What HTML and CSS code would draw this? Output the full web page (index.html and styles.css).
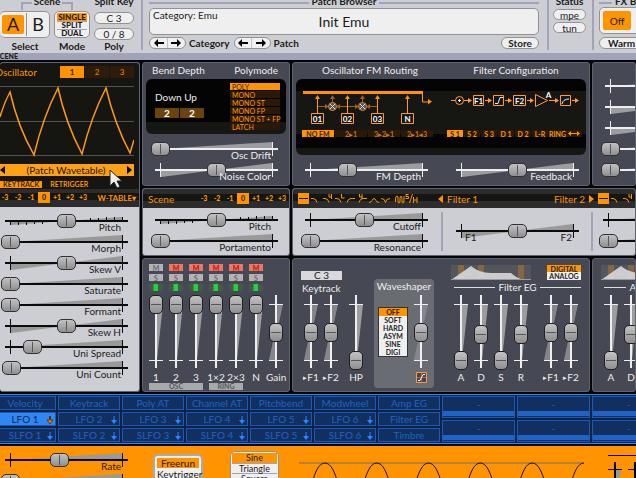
FILE: index.html
```html
<!DOCTYPE html>
<html lang="en">
<head>
<meta charset="utf-8">
<title>Synth editor</title>
<link rel="stylesheet" href="styles.css">
</head>
<body>
<svg class="defs" width="0" height="0" aria-hidden="true">
  <symbol id="h-uni" viewBox="0 0 131 14"><path class="wedge" d="M9 7L122 0V7z"/><path class="rail" d="M4 6h123v2H4zM9 0h1v14H9zM121 0h1v14h-1z"/></symbol>
  <symbol id="h-bi" viewBox="0 0 131 14"><path class="wedge" d="M10 7V14L65 7zM65 7L121 0V7z"/><path class="rail" d="M4 6h123v2H4zM9 0h1v14H9zM121 0h1v14h-1z"/></symbol>
  <symbol id="h-step" viewBox="0 0 131 14"><path class="wedge" d="M10 7V11L65 7zM65 7L121 3V7z"/><path class="rail" d="M4 6h123v2H4zM9 8h1v3H9zM17 8h1v3h-1zM25 8h1v3h-1zM33 8h1v2h-1zM41 8h1v2h-1zM89 4h1v2h-1zM97 4h1v2h-1zM105 3h1v3h-1zM113 3h1v3h-1zM121 3h1v3h-1z"/></symbol>
  <symbol id="v-uni" viewBox="0 0 20 75"><path class="wedge" d="M10 9h7L11 65z"/><path class="rail" d="M9 0h2v73H9zM3 9h14v1H3zM3 65h14v1H3z"/></symbol>
  <symbol id="v-bi" viewBox="0 0 20 75"><path class="wedge dim" d="M10 9h7L11 37zM9 37L3 65h6z"/><path class="rail" d="M9 0h2v73H9zM3 9h14v1H3zM3 65h14v1H3z"/></symbol>
  <symbol id="types" viewBox="0 0 120 12">
    <path fill="#ff9300" d="M0 0h11v11H0z"/><path stroke="#201200" d="M1 5.500h9"/>
    <g fill="none" stroke="#ff9300">
      <path d="M13 5.500h2q3 0 4 4M25 5.500h2q3 0 4 4M31 1v3h3M33.500 1v5M37 5.500h2q3 0 4 4M43.500 1v4h3M49 9.500q1-4 4-4h4M61 9.500q1-4 4-4h4M61.500 1v3h3M64 1v5M71 9.500q2 0 3-2t2-2t2 2t3 2M83 5.500q4 0 4.500 4q.5-4 4.500-4M97.500 9V6q0-3 1.500-3t1 3v2q0 2 1 2t1-2V6q0-3 1-3t1 3v2q0 2 1 2t1-2V3"/>
      <path d="M110.500 1.500h-2.500v2h2.500v2h-3M114.500 1l-3 9M115.500 4v6M119 4v6M115.500 7h3.500"/>
    </g>
  </symbol>
  <symbol id="down" viewBox="0 0 8 8"><path d="M3.500 0h1v4H7L4 8 1 4h2.500z" fill="currentColor"/></symbol>
  <symbol id="arrow-l" viewBox="0 0 10 8"><path d="M0 4l4-4v3h6v2H4v3z"/></symbol>
  <symbol id="arrow-r" viewBox="0 0 10 8"><path d="M10 4L6 0v3H0v2h6v3z"/></symbol>
  <symbol id="env" viewBox="0 0 80 15">
    <path fill="#55565c" d="M0 0h80v15H0z"/><path fill="#846747" d="M7 0h6v15H7zM27 0h6v15h-6zM67 0h6v15h-6z"/>
    <path fill="#d9d9dc" fill-opacity=".9" d="M0 15L20 1Q28 8 40 8h20q5 5 13 7z"/><path stroke="#999aa0" d="M0 14.500h80"/>
  </symbol>
</svg>

<header class="top">
  <section class="bar scene-bar">
    <div class="legend bracket"><span>Scene</span></div>
    <div class="legend"><span>Split Key</span></div>
    <div class="cell"><div class="box ab"><button class="on">A</button><button>B</button></div><span>Select</span></div>
    <div class="cell"><div class="box modes"><button class="on">SINGLE</button><button>SPLIT</button><button>DUAL</button></div><span>Mode</span></div>
    <div class="cell poly"><div class="pills"><button class="pill">C 3</button><button class="pill">0 / 8</button></div><span>Poly</span></div>
  </section>
  <section class="bar patch">
    <div class="legend ruled"><span>Patch Browser</span></div>
    <div class="box name"><span class="cat">Category: Emu</span><strong>Init Emu</strong><span></span></div>
    <div class="nav">
      <div class="pill pair"><button aria-label="Previous category"><svg><use href="#arrow-l"/></svg></button><button aria-label="Next category"><svg><use href="#arrow-r"/></svg></button></div><span>Category</span>
      <div class="pill pair"><button aria-label="Previous patch"><svg><use href="#arrow-l"/></svg></button><button aria-label="Next patch"><svg><use href="#arrow-r"/></svg></button></div><span>Patch</span>
      <button class="pill store">Store</button>
    </div>
  </section>
  <section class="bar status">
    <div class="legend"><span>Status</span></div>
    <button class="pill">mpe</button><button class="pill">tun</button>
  </section>
  <section class="bar fx">
    <div class="legend ruled"><span>FX Bypass</span></div>
    <div class="box fxbox"><button class="on">Off</button></div>
    <button class="pill warm">Warm</button>
  </section>
</header>
<div class="band">SCENE</div>

<main class="rack">
  <section class="panel osc">
    <div class="screen">
      <div class="head"><h2>Oscillator</h2><div class="tabs"><button class="on">1</button><button>2</button><button>3</button></div></div>
      <svg class="wave" viewBox="0 0 134 78"><path stroke="#55554f" d="M0 5.500h134M0 40.500h134M0 74.500h134"/><path fill="none" stroke="#ff9a14" stroke-width="1.500" d="M0 36Q4 22 10 11Q18 46 34 74Q43 36 58 7Q66 43 82 73Q91 36 106 7Q115 44 130 72L134 59"/></svg>
      <button class="table"><svg viewBox="0 0 5 8"><path d="M5 0v8L0 4z"/></svg><span>(Patch Wavetable)</span><svg viewBox="0 0 5 8"><path d="M0 0v8l5-4z"/></svg></button>
      <div class="flags"><button class="on">KEYTRACK</button><button>RETRIGGER</button></div>
      <svg class="cursor" viewBox="0 0 13 20"><path d="M1 1v16l4-4 3 6 3-1.500-3-5.500h5z" fill="#eee" stroke="#222"/></svg>
    </div>
    <div class="strip"><div class="oct"><button>-3</button><button>-2</button><button>-1</button><button class="on">0</button><button>+1</button><button>+2</button><button>+3</button></div><button class="wt">W-TABLE▾</button></div>
    <div class="stack first">
      <label class="hs"><svg><use href="#h-step"/></svg><input type="range" value="50"><span>Pitch</span></label>
      <label class="hs"><svg><use href="#h-uni"/></svg><input type="range" value="0"><span>Morph</span></label>
      <label class="hs"><svg><use href="#h-bi"/></svg><input type="range" value="50"><span>Skew V</span></label>
      <label class="hs"><svg><use href="#h-uni"/></svg><input type="range" value="0"><span>Saturate</span></label>
      <label class="hs"><svg><use href="#h-uni"/></svg><input type="range" value="0"><span>Formant</span></label>
      <label class="hs"><svg><use href="#h-bi"/></svg><input type="range" value="50"><span>Skew H</span></label>
      <label class="hs"><svg><use href="#h-uni"/></svg><input type="range" value="20"><span>Uni Spread</span></label>
      <label class="hs"><svg><use href="#h-uni"/></svg><input type="range" value="1"><span>Uni Count</span></label>
    </div>
  </section>

  <section class="panel dark bend">
    <div class="titles"><h2>Bend Depth</h2><h2>Polymode</h2></div>
    <div class="lcd bendlcd">
      <div class="depth"><span>Down Up</span><div><button>2</button><button>2</button></div></div>
      <div class="polymode"><button class="on">POLY</button><button>MONO</button><button>MONO ST</button><button>MONO FP</button><button>MONO ST + FP</button><button>LATCH</button></div>
    </div>
    <div class="stack">
      <label class="hs"><svg><use href="#h-uni"/></svg><input type="range" value="0"><span>Osc Drift</span></label>
      <label class="hs"><svg><use href="#h-bi"/></svg><input type="range" value="50"><span>Noise Color</span></label>
    </div>
  </section>

  <section class="panel dark routing">
    <div class="titles"><h2>Oscillator FM Routing</h2><h2>Filter Configuration</h2></div>
    <div class="lcd wide">
      <div class="half">
        <svg class="diagram" viewBox="0 0 140 46">
          <g fill="none" stroke="#ff9a2a"><path stroke-width="3" stroke="#ff9300" d="M2 9.500h120"/><path d="M121.500 10v9h7M16.500 15v15M46.500 15v15M76.500 15v15M106.500 15v15"/><path stroke="#a35d17" d="M31.500 15v5M61.500 15v5M17 23.500h10M36 23.500h10M47 23.500h10M66 23.500h10"/><path d="M10.500 30.500h12v10h-12zM40.500 30.500h12v10h-12zM70.500 30.500h12v10h-12zM100.500 30.500h12v10h-12z"/></g>
          <path fill="#ff9300" d="M14 16l2.500-4 2.500 4zM44 16l2.500-4 2.500 4zM74 16l2.500-4 2.500 4zM104 16l2.500-4 2.500 4zM127 16l4 2.500-4 3z"/>
          <path fill="#a35d17" d="M29 16l2.500-4 2.500 4zM59 16l2.500-4 2.500 4zM24 21l4 2.500-4 2.500zM39 21l-4 2.500 4 2.500zM54 21l4 2.500-4 2.500zM69 21l-4 2.500 4 2.500z"/>
          <g fill="#555" stroke="#d98032"><circle cx="31.500" cy="23.500" r="4"/><circle cx="61.500" cy="23.500" r="4"/></g><path stroke="#ddd" d="M29 21l5 5M34 21l-5 5M59 21l5 5M64 21l-5 5"/>
          <g class="ntext"><text x="16.500" y="38.500">01</text><text x="46.500" y="38.500">02</text><text x="76.500" y="38.500">03</text><text x="106.500" y="38.500">N</text></g>
        </svg>
        <div class="keys k4"><button class="on">NO FM</button><button>2▸1</button><button>3▸2▸1</button><button>2▸1◂3</button></div>
      </div>
      <div class="half">
        <svg class="diagram" viewBox="0 0 140 46">
          <g fill="none" stroke="#ff9a40"><path d="M0 17.500h4M13 17.500h5M34 17.500h5M54 17.500h5M76 17.500h5M98 17.500h7M121 17.500h5"/><circle cx="8.500" cy="17.500" r="4"/><path d="M22.500 12.500h10v10h-10zM42.500 12.500h10v10h-10zM62.500 12.500h12v10h-12zM84.500 11.500l12 6-12 6zM109.500 12.500h10v10h-10z"/></g>
          <path fill="#ff9a40" d="M17 15l4 2.500-4 2.500zM37 15l4 2.500-4 2.500zM57 15l4 2.500-4 2.500zM79 15l4 2.500-4 2.500zM104 15l4 2.500-4 2.500zM124 15l4 2.500-4 2.500z"/>
          <path fill="none" stroke="#eee" d="M7 17.500h3M8.500 16v3M44 20.500h3l2-6h3M111 21q1-5 7-5"/>
          <g class="ntext"><text x="27.500" y="20.500">F1</text><text x="68.500" y="20.500">F2</text><text x="97.500" y="15">A</text></g>
        </svg>
        <div class="keys k8"><button class="on">S 1</button><button>S 2</button><button>S 3</button><button>D 1</button><button>D 2</button><button>L-R</button><button>RING</button><button aria-label="Wide"><svg viewBox="0 0 12 5"><path d="M0 2.500L3 0v2h6V0l3 2.500L9 5V3H3v2z" fill="#ff9300"/></svg></button></div>
      </div>
    </div>
    <div class="two">
      <label class="hs"><svg><use href="#h-uni"/></svg><input type="range" value="33"><span>FM Depth</span></label>
      <label class="hs"><svg><use href="#h-bi"/></svg><input type="range" value="50"><span>Feedback</span></label>
    </div>
  </section>

  <section class="panel dark edge">
    <label class="hs nothumb"><svg><use href="#h-uni"/></svg><input type="range" value="100" aria-label="Volume"></label>
    <label class="hs nothumb"><svg><use href="#h-bi"/></svg><input type="range" value="100" aria-label="Pan"></label>
    <label class="hs nothumb"><svg><use href="#h-bi"/></svg><input type="range" value="100" aria-label="Width"></label>
    <label class="hs"><svg><use href="#h-uni"/></svg><input type="range" value="0" aria-label="Send 1"></label>
    <label class="hs"><svg><use href="#h-uni"/></svg><input type="range" value="0" aria-label="Send 2"></label>
  </section>

  <section class="panel scene">
    <div class="strip"><h2>Scene</h2><div class="oct"><button>-3</button><button>-2</button><button>-1</button><button class="on">0</button><button>+1</button><button>+2</button><button>+3</button></div></div>
    <div class="stack">
      <label class="hs"><svg><use href="#h-step"/></svg><input type="range" value="50"><span>Pitch</span></label>
      <label class="hs"><svg><use href="#h-uni"/></svg><input type="range" value="0"><span>Portamento</span></label>
    </div>
  </section>

  <section class="panel filters">
    <div class="strip"><svg class="types"><use href="#types"/></svg><div class="fnames"><button><svg viewBox="0 0 5 8"><path d="M5 0v8L0 4z"/></svg>Filter 1</button><button>Filter 2<svg viewBox="0 0 5 8"><path d="M0 0v8l5-4z"/></svg></button></div><svg class="types"><use href="#types"/></svg></div>
    <div class="fbody">
      <div class="stack">
        <label class="hs"><svg><use href="#h-uni"/></svg><input type="range" value="48"><span>Cutoff</span></label>
        <label class="hs"><svg><use href="#h-uni"/></svg><input type="range" value="0"><span>Resonance</span></label>
      </div>
      <div class="balance"><label class="hs"><svg><use href="#h-bi"/></svg><input type="range" value="50"><span>F1</span><span>F2</span></label></div>
      <div class="stack">
        <label class="hs nothumb"><svg><use href="#h-uni"/></svg><input type="range" value="100" aria-label="Cutoff 2"></label>
        <label class="hs"><svg><use href="#h-uni"/></svg><input type="range" value="0" aria-label="Resonance 2"></label>
      </div>
    </div>
  </section>

  <section class="panel dark mixer">
    <div class="ch"><button>M</button><button>S</button><i></i><label class="vs"><svg><use href="#v-uni"/></svg><input type="range" value="100"><span>1</span></label></div>
    <div class="ch"><button class="mute">M</button><button>S</button><i></i><label class="vs"><svg><use href="#v-uni"/></svg><input type="range" value="100"><span>2</span></label></div>
    <div class="ch"><button class="mute">M</button><button>S</button><i></i><label class="vs"><svg><use href="#v-uni"/></svg><input type="range" value="100"><span>3</span></label></div>
    <div class="ch"><button class="mute">M</button><button>S</button><i></i><label class="vs"><svg><use href="#v-uni"/></svg><input type="range" value="100"><span>1×2</span></label></div>
    <div class="ch"><button class="mute">M</button><button>S</button><i></i><label class="vs"><svg><use href="#v-uni"/></svg><input type="range" value="100"><span>2×3</span></label></div>
    <div class="ch"><button class="mute">M</button><button>S</button><i></i><label class="vs"><svg><use href="#v-uni"/></svg><input type="range" value="100"><span>N</span></label></div>
    <div class="ch gain"><label class="vs"><svg><use href="#v-bi"/></svg><input type="range" value="50"><span>Gain</span></label></div>
    <div class="tag t1">OSC</div><div class="tag t2">RING</div>
  </section>

  <section class="panel dark mods">
    <div class="keytrack">
      <button class="root">C 3</button><h2>Keytrack</h2>
      <div class="faders">
        <label class="vs"><svg><use href="#v-bi"/></svg><input type="range" value="50"><span><small>▸</small>F1</span></label>
        <label class="vs"><svg><use href="#v-bi"/></svg><input type="range" value="50"><span><small>▸</small>F2</span></label>
        <label class="vs hp"><svg><use href="#v-uni"/></svg><input type="range" value="0"><span>HP</span></label>
      </div>
    </div>
    <div class="shaper">
      <h2>Waveshaper</h2>
      <div class="shbody">
        <div class="shlist"><button class="on">OFF</button><button>SOFT</button><button>HARD</button><button>ASYM</button><button>SINE</button><button>DIGI</button></div>
        <label class="vs"><svg><use href="#v-bi"/></svg><input type="range" value="50" aria-label="Drive"><span><svg class="shicon" viewBox="0 0 11 11"><path fill="#45464f" stroke="#ff9a40" d="M.5.5h10v10H.5z"/><path stroke="#a86a3a" d="M1 5.500h9M5.500 1v9"/><path fill="none" stroke="#fff" d="M2 8.500h2l3-6h2"/></svg></span></label>
      </div>
    </div>
    <div class="eg">
      <div class="egtop"><svg class="env"><use href="#env"/></svg><div class="da"><button class="on">DIGITAL</button><button>ANALOG</button></div></div>
      <h2 class="ruled"><span>Filter EG</span></h2>
      <div class="faders">
        <label class="vs"><svg><use href="#v-uni"/></svg><input type="range" value="0"><span>A</span></label>
        <label class="vs"><svg><use href="#v-uni"/></svg><input type="range" value="46"><span>D</span></label>
        <label class="vs"><svg><use href="#v-uni"/></svg><input type="range" value="0"><span>S</span></label>
        <label class="vs"><svg><use href="#v-uni"/></svg><input type="range" value="46"><span>R</span></label>
        <label class="vs to"><svg><use href="#v-bi"/></svg><input type="range" value="50"><span><small>▸</small>F1</span></label>
        <label class="vs"><svg><use href="#v-bi"/></svg><input type="range" value="50"><span><small>▸</small>F2</span></label>
      </div>
    </div>
  </section>

  <section class="panel dark amp">
    <div class="eg">
      <div class="egtop"><svg class="env"><use href="#env"/></svg></div>
      <h2 class="ruled"><span>Amp EG</span></h2>
      <div class="faders">
        <label class="vs"><svg><use href="#v-uni"/></svg><input type="range" value="0"><span>A</span></label>
        <label class="vs"><svg><use href="#v-uni"/></svg><input type="range" value="46"><span>D</span></label>
      </div>
    </div>
  </section>
</main>

<section class="modbar">
  <div class="sources">
    <button>Velocity</button><button>Keytrack</button><button>Poly AT</button><button>Channel AT</button><button>Pitchbend</button><button>Modwheel</button><button>Amp EG</button>
    <button class="on">LFO 1<svg><use href="#down"/></svg></button><button>LFO 2<svg><use href="#down"/></svg></button><button>LFO 3<svg><use href="#down"/></svg></button><button>LFO 4<svg><use href="#down"/></svg></button><button>LFO 5<svg><use href="#down"/></svg></button><button>LFO 6<svg><use href="#down"/></svg></button><button>Filter EG</button>
    <button>SLFO 1<svg><use href="#down"/></svg></button><button>SLFO 2<svg><use href="#down"/></svg></button><button>SLFO 3<svg><use href="#down"/></svg></button><button>SLFO 4<svg><use href="#down"/></svg></button><button>SLFO 5<svg><use href="#down"/></svg></button><button>SLFO 6<svg><use href="#down"/></svg></button><button>Timbre</button>
  </div>
  <div class="macros"><button>-</button><button>-</button><button>-</button><button>-</button><button>-</button><button>-</button></div>
</section>

<section class="lfo">
  <div class="stack">
    <label class="hs"><svg><use href="#h-uni"/></svg><input type="range" value="44"><span>Rate</span></label>
    <label class="hs"><svg><use href="#h-uni"/></svg><input type="range" value="0" aria-label="Phase"></label>
  </div>
  <div class="box trig"><button class="on">Freerun</button><button>Keytrigger</button></div>
  <div class="box shapes"><button class="on">Sine</button><button>Triangle</button><button>Square</button></div>
  <svg class="sine" viewBox="0 0 286 34"><path stroke="#b9803a" stroke-width="2" d="M0 6h286"/><path fill="none" stroke="#111" d="M0 45C13 45 13 6 26 6S39 45 52 45S65 6 78 6S91 45 104 45S117 6 130 6S143 45 156 45S169 6 182 6S195 45 208 45S221 6 234 6S247 45 260 45S273 6 286 6"/></svg>
  <svg class="lfoeg" viewBox="0 0 28 26"><path d="M0 0h28v1H0zM0 14h14v1H0zM6 7h2v19H6zM20 14h8v1h-8zM26 7h2v19h-2z"/><path fill="#999" d="M8 15h5l-2 11H8z"/></svg>
</section>
</body>
</html>
```
FILE: styles.css
```css
* { box-sizing: border-box; }
body {
  margin: 0;
  overflow: hidden;
  background: #060608;
  font: 10px/12px Lato, "Liberation Sans", sans-serif;
  color: #1c1c20;
}
h2 { margin: 0; font-size: 10px; line-height: 12px; font-weight: 400; }
button {
  margin: 0; padding: 0; border: 0;
  background: none; color: inherit;
  font: inherit; line-height: inherit;
  white-space: nowrap;
}
svg { display: block; }
.defs { position: absolute; }

/* Header */
.top {
  display: flex;
  height: 59px;
  margin-top: -6px;
  padding-bottom: 3px;
  background: #cdced3;
}
.bar { border-right: 2px solid #a1a3b9; font-weight: 700; }
.legend { height: 13px; line-height: 14px; text-align: center; white-space: nowrap; }
.ruled { display: flex; align-items: center; gap: 3px; }
.ruled::before, .ruled::after { content: ""; flex: 1; height: 2px; background: #a1a3b9; }
.legend.ruled::before, .legend.ruled::after { margin-top: 4px; }
.bracket { grid-column: span 2; display: flex; justify-content: center; gap: 2px; padding-left: 4px; }
.bracket::before, .bracket::after { content: ""; width: 9px; height: 6px; margin-top: 8px; border-top: 2px solid #a1a3b9; }
.bracket::before { border-left: 2px solid #a1a3b9; }
.bracket::after { border-right: 2px solid #a1a3b9; }
.box { border: 1px solid #929292; border-radius: 5px; background: #efefef; }
.on { background: #ff9300; }
.pill {
  height: 12px;
  border: 1px solid #929292;
  border-radius: 6px;
  background: #efefef;
  line-height: 10px;
  text-align: center;
}
.scene-bar {
  display: grid;
  grid-template-columns: 50px 36px 40px;
  grid-template-rows: 13px 1fr;
  column-gap: 4px;
  padding-right: 7px;
}
.cell { display: flex; flex-direction: column; align-items: center; padding-top: 4px; gap: 2px; }
.cell > .box { width: 100%; height: 27px; }
.ab { display: flex; padding: 3px 0 3px 2px; font-size: 18px; font-weight: 400; border-left: 0; }
.ab button { flex: 1; line-height: 19px; }
.ab .on { border-radius: 2px; }
.ab button + button { margin: -2px 0 -2px 2px; border-left: 1px solid #929292; }
.modes { padding: 1px 2px; font-size: 8px; line-height: 8px; font-weight: 900; }
.modes button { display: block; width: 100%; height: 8px; }
.modes button + button { border-top: 1px solid #a1a3b9; line-height: 7px; }
.pills { display: grid; gap: 4px; width: 100%; height: 27px; padding-top: 1px; font-weight: 400; }
.patch { flex: 1; padding: 0 8px 0 6px; }
.name {
  display: grid;
  grid-template-columns: 1fr auto 1fr;
  align-items: center;
  height: 27px;
  margin-top: 1px;
  padding: 0 3px;
  font-weight: 400;
}
.name .cat { align-self: start; }
.name strong { font-size: 14px; font-weight: 400; }
.nav { display: flex; align-items: center; gap: 3px; margin-top: 2px; }
.nav span { margin-right: 1px; }
.pair { display: flex; width: 37px; }
.pair button { flex: 1; display: flex; align-items: center; justify-content: center; }
.pair button + button { box-shadow: -1px 0 0 #c3c4d0; }
.pair svg { width: 10px; height: 8px; }
.store { width: 38px; margin-left: auto; font-weight: 700; }
.status { width: 45px; padding: 0 6px 0 4px; }
.status .pill { display: block; width: 100%; margin-top: 2px; height: 11px; line-height: 8px; font-weight: 400; }
.fx { width: 42px; padding-left: 5px; border: 0; overflow: hidden; }
.fx .legend { width: 78px; }
.fxbox { width: 92px; height: 27px; padding: 3px; }
.fxbox button { width: 28px; height: 19px; border-radius: 2px; font-weight: 400; }
.warm { width: 92px; margin-top: 3px; padding-left: 8px; text-align: left; font-weight: 700; }
.band { height: 7px; overflow: hidden; background: #a1a3b9; font-size: 7px; line-height: 7px; font-weight: 900; text-indent: -4px; }

/* Rack */
.rack {
  display: grid;
  grid-template-columns: 140px 148px 298px minmax(0, 1fr);
  grid-template-rows: minmax(124px, auto) minmax(68px, auto) minmax(134px, auto);
  gap: 2px;
  margin-top: 2px;
}
.panel { border: 1px solid #5d6470; border-radius: 3px; background: #cdced3; overflow: hidden; }
.dark { background: #464853; color: #eee; --rail: #eee; --wedge: #9c9da1; --dim: #85868d; }
.osc { grid-row: span 3; border-left: 0; }
.filters { grid-column: span 2; }
.screen { position: relative; height: 126px; padding: 3px 5px 0 0; background: #151512; color: #ff9300; }
.head { display: flex; justify-content: space-between; margin-left: -5px; }
.tabs { display: grid; grid-template-columns: repeat(3, 24px); gap: 1px; font-size: 8px; line-height: 11px; font-weight: 700; }
.tabs button { background: #2e1b09; color: #c87412; }
.tabs .on, .flags .on { background: #ff9300; color: #3a2000; }
.wave { width: 134px; height: 78px; margin-top: 3px; }
.table { display: flex; justify-content: space-between; align-items: center; width: 134px; height: 12px; padding: 0 2px 0 0; margin-top: 5px; line-height: 12px; background: #ffa114; color: #1d1200; }
.table svg { width: 5px; height: 8px; }
.flags { display: flex; gap: 5px; margin-top: 5px; font-size: 7px; line-height: 7px; font-weight: 700; }
.flags button { height: 7px; padding: 0 3px; }
.cursor { position: absolute; left: 109px; top: 106px; width: 13px; height: 20px; }
.strip {
  display: flex;
  align-items: center;
  height: 19px;
  padding: 0 1px 0 5px;
  background: linear-gradient(#2c2c2c 5px, #151512 5px 12px, #2c2c2c 12px);
  color: #ff9300;
}
.oct { display: grid; grid-template-columns: repeat(7, 12px); gap: 1px; margin-left: auto; font-size: 7px; line-height: 11px; font-weight: 900; }
.oct .on { color: #3a2000; }
.osc .strip { padding-left: 0; margin-top: -1px; justify-content: space-between; }
.osc .oct { margin-left: -1px; }
.wt { font-size: 8px; line-height: 10px; font-weight: 700; margin-right: 2px; }

/* Sliders */
.stack { display: grid; align-content: start; grid-auto-rows: 21px; padding: 5px 0 0 8px; }
.first { padding: 7px 0 0 1px; }
.hs { display: grid; grid-template-columns: 11px 1fr 11px; grid-template-rows: 8px 13px; width: 131px; height: 21px; }
.hs > svg, .hs > input { grid-area: 1 / 1 / 3 / 4; width: 131px; height: 14px; }
.hs > span { grid-area: 2 / 2; justify-self: end; line-height: 11px; }
.wedge { fill: var(--wedge, #999); }
.wedge.dim { fill: var(--dim, #999); }
.rail { fill: var(--rail, #0b0b0b); }
input[type="range"] { appearance: none; margin: 0; background: none; }
input[type="range"]::-webkit-slider-runnable-track { background: none; }
.hs input::-webkit-slider-thumb {
  appearance: none;
  width: 19px; height: 14px;
  border: 1px solid #303032;
  border-radius: 5px;
  background: linear-gradient(#55555a, #55555a) center / 1px 10px no-repeat, linear-gradient(#c2c2c2, #8f8f8f);
}
.nothumb input { opacity: 0; }
.vs { display: grid; grid-template-rows: 75px 14px; width: 20px; }
.vs > svg, .vs > input { grid-area: 1 / 1; width: 20px; height: 75px; }
.vs > span { display: flex; justify-content: center; line-height: 14px; white-space: nowrap; }
.vs small { font-size: 7px; }
.vs input { writing-mode: vertical-lr; direction: rtl; }
.vs input::-webkit-slider-thumb {
  appearance: none;
  width: 14px; height: 19px;
  border: 1px solid #202022;
  border-radius: 5px;
  background: linear-gradient(#55555a, #55555a) center / 10px 1px no-repeat, linear-gradient(#c2c2c2, #8f8f8f);
}

/* Upper panels */
.titles { display: flex; justify-content: space-between; padding: 1px 11px 3px 9px; }
.lcd { margin: 0 3px; border-radius: 6px; }
.bendlcd {
  display: flex; justify-content: space-between;
  height: 55px; padding: 4px 6px 0 9px;
  background: linear-gradient(#040404 43px, #161612 43px);
}
.depth { padding-top: 8px; }
.depth div { display: flex; gap: 1px; margin-top: 5px; }
.depth button { width: 24px; height: 10px; line-height: 9px; background: #6b430f; font-weight: 700; color: #fff; }
.polymode { display: grid; grid-auto-rows: 7px; gap: 1px; width: 50px; font-size: 7px; line-height: 6px; align-content: start; color: #ff9300; }
.polymode button { padding-left: 2px; text-align: left; background: #2a1907; }
.polymode .on { background: #ff9300; color: #3a2000; }
.bend .stack { padding-top: 8px; }
.routing .titles h2 { flex: 1; text-align: center; }
.routing .titles { padding-left: 4px; padding-right: 0; }
.wide {
  display: grid; grid-template-columns: 150px 1fr;
  height: 76px; padding: 4px 0 0 5px;
  background: linear-gradient(#040404 12px, #161612 12px 55px, #040404 55px 69px, #161612 69px);
}
.diagram { width: 140px; height: 46px; margin-bottom: 1px; }
.ntext { fill: #fff; font-size: 8px; font-weight: 700; text-anchor: middle; }
.keys { display: grid; gap: 1px; height: 7px; font-size: 7px; line-height: 6px; font-weight: 700; color: #c87412; }
.k4 { grid-template-columns: repeat(4, 32px); padding-left: 1px; }
.k8 { grid-template-columns: repeat(8, 16px); margin-left: -4px; }
.keys button { background: #2a1907; }
.keys svg { width: 12px; height: 5px; margin: 0 auto; }
.k8 button { color: #ff9300; }
.keys .on { background: #ff9300; color: #3a2000; }
.two { display: flex; gap: 20px; padding: 8px 0 0 8px; }
.edge { display: grid; align-content: start; grid-auto-rows: 21px; padding: 16px 0 0 8px; }

/* Filter row */
.types { width: 120px; height: 12px; flex: none; }
.fnames { flex: none; display: flex; justify-content: space-between; width: 156px; margin: 0 4px 0 20px; }
.fnames button { display: flex; align-items: center; gap: 4px; }
.fnames svg { width: 5px; height: 8px; fill: #ff9300; }
.fbody { display: grid; grid-template-columns: 148px 150px 1fr; }
.fbody > * + * { background: linear-gradient(#a1a3b9, #a1a3b9) 0 4px / 2px 39px no-repeat; }
.balance { padding: 16px 0 0 11px; }
.balance .hs > span:nth-of-type(1) { justify-self: start; padding-left: 2px; }

/* Lower panels */
.mixer { display: grid; grid-template-columns: repeat(7, 20px); grid-template-rows: 119px 7px; justify-content: center; padding-top: 5px; }
.ch { display: grid; grid-template-rows: 7px 7px 7px; row-gap: 3px; justify-items: center; align-content: start; }
.ch > button { width: 14px; height: 7px; font-size: 7px; line-height: 6px; font-weight: 700; background: #b3b3b5; color: #66676c; }
.ch > .mute { background: #ee7463; color: #b8150a; }
.ch i { width: 14px; background: linear-gradient(90deg, #46584a 4px, #1fd53b 5px 9px, #46584a 9px); }
.ch .vs { margin-top: 1px; }
.gain { padding-top: 30px; }
.tag { height: 7px; background: #a9a9ac; color: #55565c; font-size: 7px; line-height: 6px; font-weight: 700; text-align: center; }
.t1 { grid-column: 1 / span 3; margin: 0 3px; }
.t2 { grid-column: 4 / span 2; margin: 0 3px; }
.mods { display: grid; grid-template-columns: 81px 60px 1fr; padding-top: 5px; }
.keytrack { padding: 7px 0 0 8px; }
.root { display: block; width: 41px; height: 9px; line-height: 9px; background: #d9d9dc; color: #222; }
.keytrack h2 { margin: 2px 0 1px 1px; }
.faders { display: flex; }
.hp { margin-left: 5px; }
.shaper { height: 109px; margin-top: 15px; border-radius: 4px; background: #6a6c73; }
.shaper h2 { text-align: center; padding-top: 1px; margin-bottom: 3px; }
.shbody { display: flex; padding-left: 4px; gap: 3px; }
.shlist { height: 50px; width: 30px; margin-top: 12px; border: 1px solid #333; background: #efefef; color: #222; font-size: 7px; line-height: 8px; font-weight: 700; }
.shlist button { display: block; width: 100%; height: 8px; }
.shicon { width: 11px; height: 11px; margin-top: 2px; }
.mods .eg { padding-left: 17px; padding-right: 11px; }
.egtop { display: flex; justify-content: space-between; height: 16px; padding-top: 1px; }
.env { width: 80px; height: 15px; flex: none; }
.da { width: 34px; background: #efefef; color: #222; font-size: 7px; line-height: 7px; font-weight: 700; }
.da button { display: block; width: 100%; height: 7px; line-height: 6px; }
.eg h2 { margin: 1px 0 2px 3px; height: 12px; }
.eg h2.ruled::before, .eg h2.ruled::after { height: 1px; background: #ddd; }
.to { margin-left: 10px; }
.amp { padding-top: 5px; }
.amp .eg { padding-left: 8px; width: 98px; }

/* Modulation */
.modbar {
  display: grid;
  grid-template-columns: 446px minmax(0, 1fr);
  gap: 2px;
  margin: 2px 0 0 -6px;
  padding: 1px 0;
  border: solid #2f87f5;
  border-width: 1px 0;
  background: #0c2247;
  color: #2162c2;
}
.sources { display: grid; grid-template-columns: repeat(7, 62px); grid-auto-rows: 14px; gap: 2px; }
.sources button { position: relative; border: 1px solid #1d59b0; background: #12305f; line-height: 12px; }
.sources svg { position: absolute; right: 1px; top: 3px; width: 8px; height: 8px; color: #2f87f5; }
.sources .on { background: #2f87f5; color: #10284f; }
.sources .on svg { color: #e9860d; stroke: #5b3604; }
.macros { display: grid; grid-template-columns: repeat(3, 73px); grid-auto-rows: 22px; gap: 2px; overflow: hidden; }
.macros button { border: 1px solid #1d59b0; background: linear-gradient(#12305f 14px, #2162c2 14px 19px, #12305f 19px); line-height: 12px; padding-bottom: 6px; }

/* LFO */
.lfo { display: flex; align-items: flex-start; min-height: 40px; margin-top: 2px; background: #ff9300; }
.lfo .stack { padding: 7px 0 0 1px; }
.trig { flex: none; width: 50px; height: 40px; margin: 8px 0 0 21px; padding: 2px; border-width: 2px; border-color: #aaa; }
.trig button { display: block; width: 100%; height: 10px; line-height: 9px; margin-bottom: 1px; }
.shapes { flex: none; width: 49px; height: 40px; margin: 5px 0 0 27px; padding: 1px; font-size: 9px; }
.shapes button { display: block; width: 100%; height: 10px; line-height: 8px; }
.shapes button + button { border-top: 1px solid #a1a3b9; }
.sine { flex: 1; min-width: 0; height: 34px; margin: 11px 24px 0 20px; }
.lfoeg { flex: none; width: 28px; height: 26px; margin-top: 9px; }
```
